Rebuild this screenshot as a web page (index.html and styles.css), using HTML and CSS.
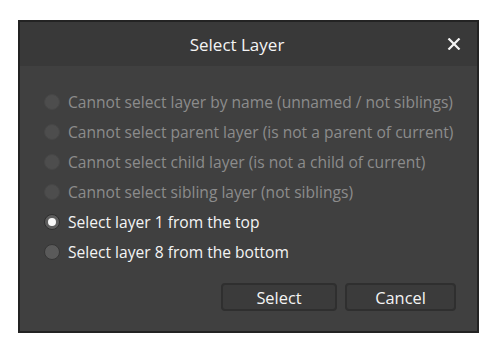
FILE: index.html
```html
<!DOCTYPE html>
<html lang="en">
<head>
    <meta charset="UTF-8">
    <title>Select Layer</title>
    <link rel="stylesheet" href="styles.css">
</head>
<body>
<div class="dialog">
    <div class="title-bar">
        <span class="title">Select Layer</span>
        <span class="close">
            <svg width="14" height="12" viewBox="0 0 14 12"><path d="M1.5 0.5 L12.5 11.5 M12.5 0.5 L1.5 11.5" stroke="#f4f4f4" stroke-width="2.2" fill="none"/></svg>
        </span>
    </div>
    <div class="content">
        <ul class="options">
            <li class="disabled"><span class="radio"></span><span>Cannot select layer by name (unnamed / not siblings)</span></li>
            <li class="disabled"><span class="radio"></span><span>Cannot select parent layer (is not a parent of current)</span></li>
            <li class="disabled"><span class="radio"></span><span>Cannot select child layer (is not a child of current)</span></li>
            <li class="disabled"><span class="radio"></span><span>Cannot select sibling layer (not siblings)</span></li>
            <li class="checked"><span class="radio"></span><span>Select layer 1 from the top</span></li>
            <li><span class="radio"></span><span>Select layer 8 from the bottom</span></li>
        </ul>
        <div class="buttons">
            <button class="btn btn-select">Select</button>
            <button class="btn btn-cancel">Cancel</button>
        </div>
    </div>
</div>
</body>
</html>
```

FILE: styles.css
```css
body{
    margin: 0;
    background: #fff;
    font-family: "Open Sans", "Noto Sans", sans-serif;
}
.dialog{
    margin: 20px 0 0 18px;
    width: 461px;
    height: 313px;
    box-sizing: border-box;
    border: 2px solid #232323;
    background: #404040;
    display: flex;
    flex-direction: column;
}
.title-bar{
    height: 44px;
    padding-right: 23px;
    background: #393939;
    display: flex;
    align-items: center;
    justify-content: center;
    position: relative;
}
.title{
    color: #f4f4f4;
    font-size: 17px;
}
.close{
    position: absolute;
    right: 16px;
    top: 16px;
    line-height: 0;
}
.content{
    flex: 1;
    padding: 21px 21px 20px 24px;
    display: flex;
    flex-direction: column;
}
.options{
    list-style: none;
    margin: 0;
    padding: 0;
}
.options li{
    height: 30px;
    display: flex;
    align-items: center;
    gap: 8px;
    font-size: 15.6px;
    color: #f4f4f4;
}
.options li.disabled{
    color: #8c8c8c;
}
.radio{
    width: 16px;
    height: 16px;
    flex: none;
    border-radius: 50%;
    box-sizing: border-box;
    background: #5a5a5a;
    border: 1px solid #363636;
    position: relative;
}
.disabled .radio{
    background: #4d4d4d;
    border-color: #474747;
}
.checked .radio{
    background: #5d5d5d;
    border: 1px solid #2e2e2e;
}
.checked .radio:after{
    content: "";
    position: absolute;
    left: 3px;
    top: 3px;
    width: 8px;
    height: 8px;
    border-radius: 50%;
    background: #f8f8f8;
}
.buttons{
    margin-top: 16px;
    display: flex;
    justify-content: flex-end;
    gap: 8px;
}
.btn{
    height: 28px;
    box-sizing: border-box;
    background: #3b3b3b;
    border: 2px solid #2f2f2f;
    border-radius: 4px;
    color: #f4f4f4;
    font-family: inherit;
    font-size: 16.4px;
    padding: 0;
}
.btn-select{
    width: 116px;
}
.btn-cancel{
    width: 111px;
}
```
